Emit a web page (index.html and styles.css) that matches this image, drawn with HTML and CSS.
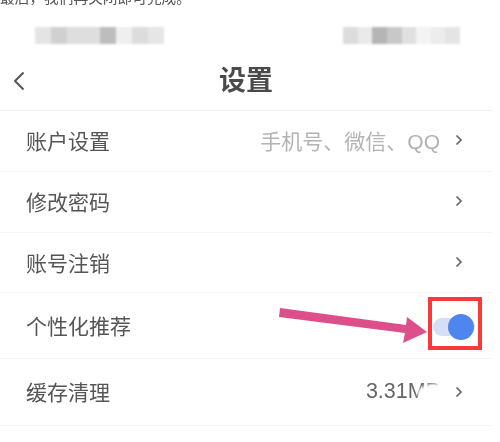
FILE: index.html
```html
<!DOCTYPE html>
<html lang="zh-CN">
<head>
<meta charset="utf-8">
<title>设置</title>
<link rel="stylesheet" href="styles.css">
</head>
<body>
<div class="page">
  <div class="caption"><span>最后，我们再关闭即可完成。</span></div>
  <div class="status">
    <div class="mosaic left"><i></i><i></i><i></i><i></i><i></i><i></i><i></i><i></i></div>
    <div class="mosaic right"><i></i><i></i><i></i><i></i><i></i><i></i><i></i><i></i></div>
  </div>
  <header class="nav">
    <svg class="back" viewBox="0 0 12 20" width="12" height="20"><path d="M10.5 1.5 2 10l8.500 8.500" fill="none" stroke="#555" stroke-width="2"/></svg>
    <h1>设置</h1>
  </header>
  <ul class="list">
    <li class="row r1"><span class="label">账户设置</span><span class="value">手机号、微信、QQ</span><svg class="chev" viewBox="0 0 8 12" width="8" height="12"><path d="M1.500 1.500 6 6l-4.500 4.500" fill="none" stroke="#666" stroke-width="1.700"/></svg></li>
    <li class="row r2"><span class="label">修改密码</span><svg class="chev" viewBox="0 0 8 12" width="8" height="12"><path d="M1.500 1.500 6 6l-4.500 4.500" fill="none" stroke="#666" stroke-width="1.700"/></svg></li>
    <li class="row r3"><span class="label">账号注销</span><svg class="chev" viewBox="0 0 8 12" width="8" height="12"><path d="M1.500 1.500 6 6l-4.500 4.500" fill="none" stroke="#666" stroke-width="1.700"/></svg></li>
    <li class="row r4"><span class="label">个性化推荐</span><span class="toggle"><b></b></span></li>
    <li class="row r5"><span class="label">缓存清理</span><span class="value dark">3.31MB</span><svg class="chev chev-low" viewBox="0 0 8 12" width="8" height="12"><path d="M1.500 1.500 6 6l-4.500 4.500" fill="none" stroke="#666" stroke-width="1.700"/></svg></li>
  </ul>
  <div class="smudge"></div>
  <svg class="arrow" viewBox="0 0 500 442" width="500" height="442"><polygon points="280,308 406,325 407,317 427,332 403,343 405,333 279,317" fill="#dc4f8b"/></svg>
  <div class="redbox"></div>
</div>
</body>
</html>
```
FILE: styles.css
```css
* { box-sizing: border-box; }
html, body { margin: 0; padding: 0; background: #fff; }
.page {
  position: relative;
  width: 500px;
  height: 442px;
  overflow: hidden;
  background: #fff;
  font-family: "Liberation Sans", "Noto Sans CJK SC", sans-serif;
}
.caption {
  height: 6px;
  overflow: hidden;
  display: flex;
  align-items: flex-end;
  font-size: 14.700px;
  line-height: 16px;
  color: #555;
  filter: blur(0.4px);
}
.caption span { display: block; white-space: nowrap; margin-bottom: 0; }
.status {
  height: 32px;
  padding: 21px 40px 0 35px;
  display: flex;
  justify-content: space-between;
}
.mosaic {
  display: flex;
  height: 17px;
  filter: blur(0.8px);
}
.mosaic i { display: block; height: 100%; flex: 1; background: #e4e4e4; }
.mosaic.left { width: 129px; }
.mosaic.right { width: 117px; }
.mosaic.left i:nth-child(2) { background: #d0d0d0; }
.mosaic.left i:nth-child(3), .mosaic.left i:nth-child(4) { background: #dedede; }
.mosaic.left i:nth-child(5) { background: #bdbdbd; }
.mosaic.left i:nth-child(6) { background: #efefef; }
.mosaic.left i:nth-child(7) { background: #dcdcdc; }
.mosaic.left i:nth-child(8) { background: #e6e6e6; }
.mosaic.right i:nth-child(1) { background: #dcdcdc; }
.mosaic.right i:nth-child(2) { background: #eaeaea; }
.mosaic.right i:nth-child(3) { background: #b5b5b5; }
.mosaic.right i:nth-child(4) { background: #c8c8c8; }
.mosaic.right i:nth-child(5) { background: #e0e0e0; }
.mosaic.right i:nth-child(6) { background: #f3f3f3; }
.mosaic.right i:nth-child(7) { background: #ececec; }
.mosaic.right i:nth-child(8) { background: #e4e4e4; }
.nav {
  height: 73px;
  width: 492px;
  position: relative;
  display: flex;
  align-items: center;
  justify-content: center;
  padding-top: 13px;
  border-bottom: 1px solid #f1f1f1;
  filter: blur(0.4px);
}
.back { position: absolute; left: 13px; top: 33px; }
.nav h1 {
  margin: 0;
  font-size: 27px;
  font-weight: 700;
  color: #4a4a4a;
  line-height: 30px;
}
.list { margin: 0; padding: 0; list-style: none; width: 492px; filter: blur(0.4px); }
.row {
  display: flex;
  align-items: center;
  padding: 0 29px 2px 26px;
  border-bottom: 1px solid #f4f4f4;
}
.r1 { height: 61px; }
.r2 { height: 61px; }
.r3 { height: 60px; }
.r4 { height: 66px; }
.r5 { height: 67px; }
.label { font-size: 21px; color: #555; flex: 1; }
.value { font-size: 21px; color: #b3b3b3; margin-right: 15px; }
.value.dark { font-size: 21.500px; color: #666; }
.chev { flex: none; }
.chev-low { margin-top: 2px; }
.toggle {
  position: relative;
  display: block;
  width: 42px;
  height: 18px;
  margin: 4px -12px 0 0;
  border-radius: 9px;
  background: #d4dff7;
}
.toggle b {
  position: absolute;
  right: 1px;
  top: -4px;
  width: 26px;
  height: 26px;
  border-radius: 50%;
  background: #4f86ee;
}
.smudge {
  position: absolute;
  left: 418px;
  top: 384px;
  width: 30px;
  height: 22px;
  background: #fff;
  border-radius: 40% 40% 30% 60%;
  filter: blur(1.500px);
  transform: rotate(-8deg);
}
.arrow { position: absolute; left: 0; top: 0; pointer-events: none; }
.redbox {
  position: absolute;
  left: 428px;
  top: 297px;
  width: 54px;
  height: 53px;
  border: 4px solid #f93a3a;
}
```
